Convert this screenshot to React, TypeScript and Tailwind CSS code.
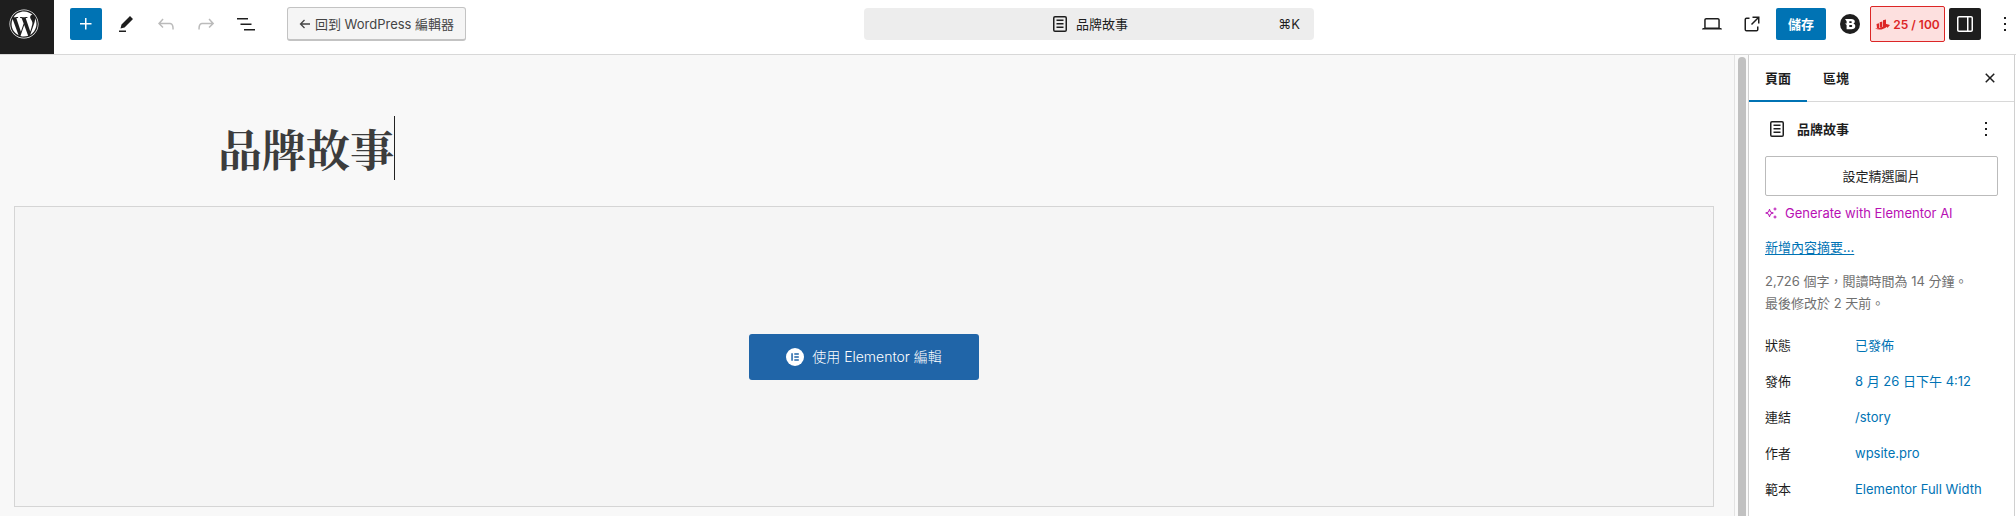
import React, { useState } from 'react';
import { FaWordpress } from 'react-icons/fa';

const ICONS = {
  plus: 'M11 12.5V17.5H12.5V12.5H17.5V11H12.5V6H11V11H6V12.5H11Z',
  pencil: 'm19 7-3-3-8.5 8.5-1 4 4-1L19 7Zm-7 11.5H5V20h7v-1.5Z',
  undo: 'M18.3 11.7c-.6-.6-1.4-.9-2.3-.9H6.7l2.9-3.3-1.1-1-4.5 5L8.5 16l1-1-2.7-2.7H16c.5 0 .9.2 1.3.5 1 1 1 3.4 1 4.5v.3h1.5v-.2c0-1.5 0-4.3-1.5-5.7z',
  redo: 'M15.6 6.5l-1.1 1 2.9 3.3H8c-.9 0-1.7.3-2.3.9-1.4 1.5-1.4 4.2-1.4 5.6v.2h1.5v-.3c0-1.1 0-3.5 1-4.5.3-.3.7-.5 1.3-.5h9.2L14.5 15l1.1 1.1 4.6-4.6-4.6-5z',
  list: 'M3 6h11v1.5H3V6Zm3.5 5.5h11V13h-11v-1.5ZM21 17H10v1.5h11V17Z',
  page: 'M15.5 7.5h-7V9h7V7.5Zm-7 3.5h7v1.5h-7V11Zm7 3.5h-7V16h7v-1.5ZM17 4H7a2 2 0 0 0-2 2v12a2 2 0 0 0 2 2h10a2 2 0 0 0 2-2V6a2 2 0 0 0-2-2ZM7 5.5h10a.5.5 0 0 1 .5.5v12a.5.5 0 0 1-.5.5H7a.5.5 0 0 1-.5-.5V6a.5.5 0 0 1 .5-.5Z',
  external: 'M19.5 4.5h-7V6h4.44l-5.97 5.97 1.06 1.06L18 7.06v4.44h1.5v-7Zm-13 1a2 2 0 0 0-2 2v10a2 2 0 0 0 2 2h10a2 2 0 0 0 2-2v-3H17v3a.5.5 0 0 1-.5.5h-10a.5.5 0 0 1-.5-.5v-10a.5.5 0 0 1 .5-.5h3V5.5h-3Z',
  desktop: 'M20.5 16h-.7V8c0-1.1-.9-2-2-2H6.2c-1.1 0-2 .9-2 2v8h-.7c-.8 0-1.5.7-1.5 1.5h20c0-.8-.7-1.5-1.5-1.5zM5.7 8c0-.3.2-.5.5-.5h11.6c.3 0 .5.2.5.5v7.6H5.7V8z',
  drawer: 'M18 4H6c-1.1 0-2 .9-2 2v12c0 1.1.9 2 2 2h12c1.1 0 2-.9 2-2V6c0-1.1-.9-2-2-2zm-4 14.5H6c-.3 0-.5-.2-.5-.5V6c0-.3.2-.5.5-.5h8v13zm4.5-.5c0 .3-.2.5-.5.5h-2.5v-13H18c.3 0 .5.2.5.5v12z',
  more: 'M13 19h-2v-2h2v2zm0-6h-2v-2h2v2zm0-6h-2V5h2v2z',
  close: 'M12 13.06l3.712 3.713 1.061-1.06L13.061 12l3.712-3.712-1.06-1.06L12 10.938 8.288 7.227l-1.061 1.06L10.939 12l-3.712 3.712 1.06 1.061L12 13.061z',
};

const DETAILS = [
  { label: '狀態', value: '已發佈' },
  { label: '發佈', value: '8 月 26 日下午 4:12' },
  { label: '連結', value: '/story' },
  { label: '作者', value: 'wpsite.pro' },
  { label: '範本', value: 'Elementor Full Width' },
];

function Icon({ name }: { name: keyof typeof ICONS }) {
  return (
    <svg viewBox="0 0 24 24" className="size-6 shrink-0" fill="currentColor" fillRule="evenodd" aria-hidden="true">
      <path d={ICONS[name]} />
    </svg>
  );
}

interface IconButtonProps {
  icon: keyof typeof ICONS;
  label: string;
  className?: string;
  disabled?: boolean;
}

function IconButton({ icon, label, className = '', disabled }: IconButtonProps) {
  return (
    <button aria-label={label} disabled={disabled} className={`flex size-8 shrink-0 items-center justify-center rounded-xs ${className}`}>
      <Icon name={icon} />
    </button>
  );
}

function Header() {
  return (
    <header className="flex border-b border-[#d8d8d8] bg-white">
      <a href="#" aria-label="WordPress" className="flex h-[54px] w-[54px] shrink-0 items-start justify-center bg-[#1e1e1e] pt-[9px] pr-[6px] text-white">
        <FaWordpress className="size-[30px]" />
      </a>
      <div className="flex h-12 min-w-0 flex-1 items-center">
        <div className="flex shrink-0 items-center gap-2 px-4">
          <IconButton icon="plus" label="新增區塊" className="bg-[#0073b4] text-white" />
          <IconButton icon="pencil" label="工具" />
          <IconButton icon="undo" label="復原" disabled className="text-[#bbb]" />
          <IconButton icon="redo" label="重做" disabled className="text-[#bbb]" />
          <IconButton icon="list" label="文件總覽" />
          <button className="ml-[17px] flex h-[34px] w-[179px] items-center justify-center rounded-[3px] border border-b-2 border-[#c3c3c3] bg-[#f5f5f5] text-[#444]">
            <svg viewBox="0 0 12 12" className="mr-1 size-3" fill="none" stroke="currentColor" strokeWidth="1.3" aria-hidden="true">
              <path d="M11 6H1.5M5.5 2 1.5 6l4 4" />
            </svg>
            回到 WordPress 編輯器
          </button>
        </div>

        <div className="flex min-w-0 flex-1 justify-center">
          <button className="flex h-8 w-[450px] items-center rounded bg-[#ededed] pr-[14px] pl-[34px]">
            <span className="flex flex-1 items-center justify-center gap-1">
              <Icon name="page" />
              品牌故事
            </span>
            <kbd className="font-[inherit]">⌘K</kbd>
          </button>
        </div>

        <div className="flex shrink-0 items-center">
          <div className="flex items-center gap-2">
            <IconButton icon="desktop" label="預覽" />
            <IconButton icon="external" label="檢視頁面" />
            <button className="h-8 w-[50px] rounded-xs bg-[#0073b4] font-semibold text-white">儲存</button>
            <button aria-label="Blocks" className="flex size-8 items-center justify-center">
              <svg viewBox="0 0 20 20" className="size-5" aria-hidden="true">
                <circle cx="10" cy="10" r="10" fill="#1e1e1e" />
                <path
                  fill="#fff"
                  fillRule="evenodd"
                  d="M5 5h6.2c2.3 0 3.6 1 3.6 2.6 0 1-.5 1.8-1.4 2.2 1.2.3 1.9 1.2 1.9 2.4 0 1.9-1.5 3-3.9 3H6.6v-4.1L5 9.6h1.6V7.2zM9.3 7.2v1.7h1.5c.7 0 1.1-.3 1.1-.85s-.4-.85-1.1-.85zM9.300 11v1.900H11c.8 0 1.2-.35 1.2-.95S11.8 11 11 11z"
                />
              </svg>
            </button>
          </div>
          <button className="ml-1 flex h-9 w-[75px] items-center justify-center gap-[3px] rounded-xs border border-[#dc2626] bg-[#fde0df] pt-[2px] text-xs font-semibold text-[#dc2626]">
            <svg viewBox="0 0 15 12" className="h-3 w-[15px]" fill="currentColor" aria-hidden="true">
              <path d="M1.500 5 4 4.300V9H2zM4.700 3.200 7.300 2.400V8.500H4.700zM8 1.300l3-.9V7L8 8.300z" />
              <path d="M0 9.500C4 9.400 8 8.400 11 6l-.4-1.200L15 6l-2.600 2.900-.5-1.200C8.500 10.600 4 11.400 0 9.500z" />
            </svg>
            25 / 100
          </button>
          <IconButton icon="drawer" label="設定" className="ml-1 bg-[#1e1e1e] text-white" />
          <IconButton icon="more" label="選項" className="ml-2 -mr-[5px]" />
        </div>
      </div>
    </header>
  );
}

function Canvas() {
  const [title, setTitle] = useState('品牌故事');

  return (
    <main className="flex min-w-0 flex-1 flex-col bg-[#f8f8f8] pt-[61px] pr-5 pb-[9px] pl-[14px]">
      <div className="flex pl-[204px]">
        <input
          aria-label="標題"
          value={title}
          onChange={(e) => setTitle(e.target.value)}
          className="h-16 w-44 bg-transparent font-['Noto_Serif_CJK_TC','Noto_Serif_TC','Noto_Sans_CJK_TC',serif] text-[44px] leading-[64px] font-bold text-[#3c3c3c] outline-none"
        />
        <span className="h-16 w-px bg-[#222]" />
      </div>
      <div className="mt-[26px] flex flex-1 items-center justify-center border border-[#d5d5d5] bg-[#f5f5f5]">
        <button className="flex h-[46px] w-[230px] items-center justify-center gap-2 rounded-[3px] bg-[#2065a8] text-sm font-light text-white">
          <svg viewBox="0 0 18 18" className="size-[18px]" aria-hidden="true">
            <circle cx="9" cy="9" r="9" fill="#fff" />
            <path fill="#2065a8" d="M5.3 5.2h1.5v7.6H5.3zM8.3 5.2h4.5v1.5H8.3zM8.3 8.25h4.5v1.5H8.3zM8.3 11.3h4.5v1.5H8.3z" />
          </svg>
          使用 Elementor 編輯
        </button>
      </div>
    </main>
  );
}

function Sidebar() {
  return (
    <aside className="mr-px w-[267px] shrink-0 border-x border-[#d0d0d0] bg-white">
      <div className="flex h-[47px] items-stretch border-b border-[#d8d8d8] font-semibold">
        <button className="-mb-px border-b-2 border-[#0073b4] px-4">頁面</button>
        <button className="px-4">區塊</button>
        <IconButton icon="close" label="關閉設定" className="mr-2 ml-auto self-center" />
      </div>

      <div className="flex flex-col px-4 pt-[11px]">
        <div className="flex h-8 items-center font-semibold">
          <Icon name="page" />
          <h2 className="ml-2">品牌故事</h2>
          <IconButton icon="more" label="動作" className="-mr-1 ml-auto" />
        </div>
        <button className="mt-[11px] h-10 rounded-xs border border-[#bbb]">設定精選圖片</button>
        <button className="mt-[7px] flex h-5 items-center gap-2 text-[#b80fb4]">
          <svg viewBox="0 0 12 12" className="size-3" fill="none" stroke="currentColor" aria-hidden="true">
            <path d="M4.500 2.200 5.500 5 8.300 6 5.500 7 4.500 9.800 3.500 7 .7 6l2.800-1z" strokeLinejoin="round" />
            <path d="M10 .5v3M8.500 2h3M10 8.500v3M8.500 10h3" />
          </svg>
          Generate with Elementor AI
        </button>
        <a href="#" className="mt-[14px] self-start text-[#0073b4] underline underline-offset-2">新增內容摘要...</a>
        <p className="mt-[13px] leading-[22px] text-[#707070]">
          2,726 個字，閱讀時間為 14 分鐘。
          <br />
          最後修改於 2 天前。
        </p>
        <dl className="mt-[13px]">
          {DETAILS.map(d => (
            <div key={d.label} className="flex h-9 items-center">
              <dt className="w-[90px]">{d.label}</dt>
              <dd><button className="whitespace-nowrap text-[#0073b4]">{d.value}</button></dd>
            </div>
          ))}
        </dl>
      </div>
    </aside>
  );
}

export default function App() {
  return (
    <div className="flex min-h-screen flex-col bg-white font-['Inter','Noto_Sans_CJK_TC',sans-serif] text-[13px] leading-5 text-[#1e1e1e]">
      <Header />
      <div className="flex flex-1">
        <Canvas />
        <div className="flex w-[14px] shrink-0 justify-center border-l border-[#e3e3e3] bg-[#fafafa] pt-[2px]">
          <div className="w-2 rounded-t-full bg-[#c1c1c1]" />
        </div>
        <Sidebar />
      </div>
    </div>
  );
}
